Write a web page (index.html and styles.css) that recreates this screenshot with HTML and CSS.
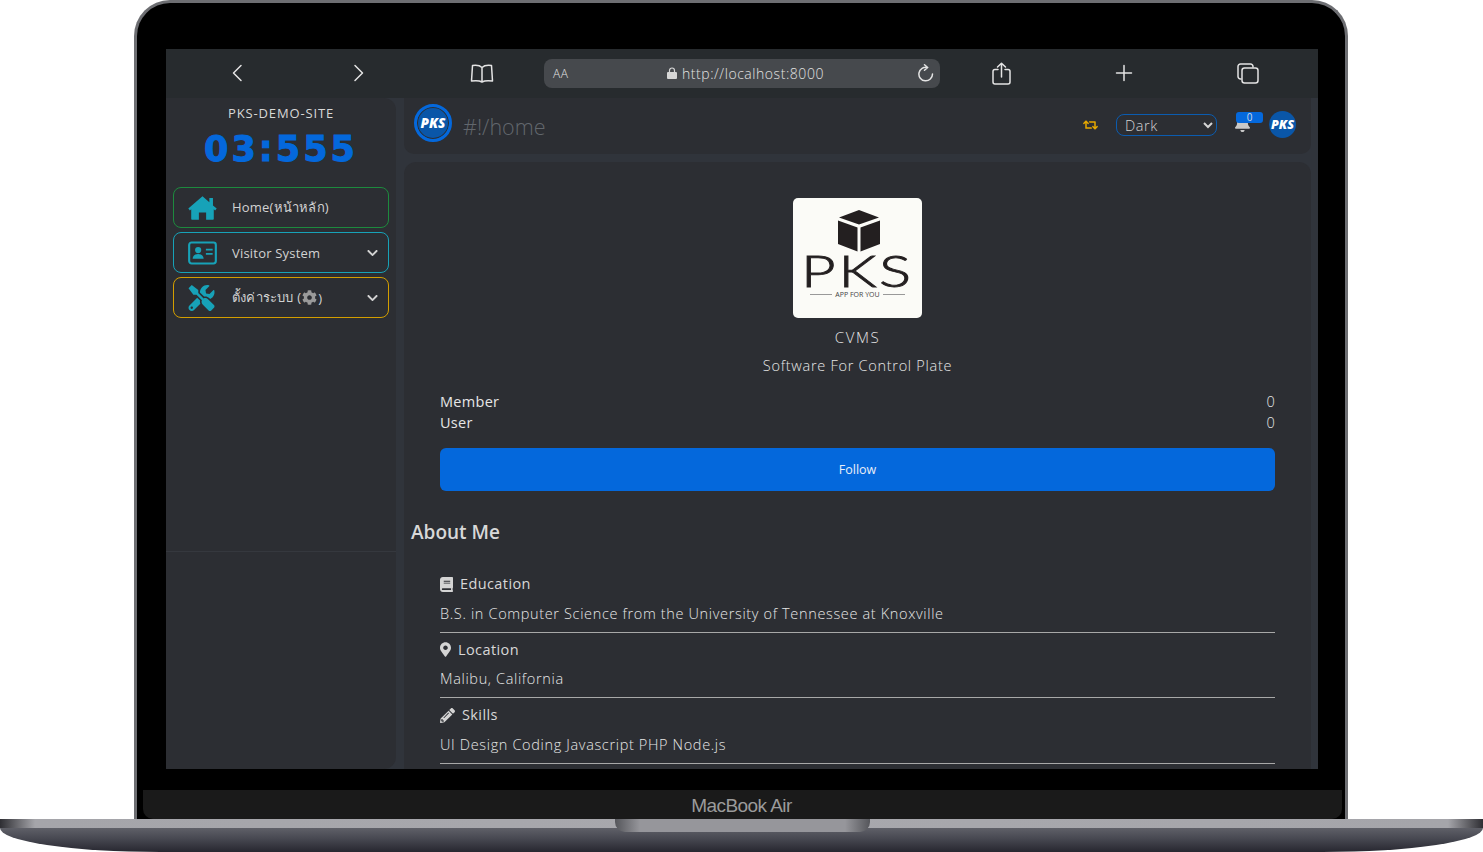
FILE: index.html
```html
<!DOCTYPE html>
<html lang="en">
<head>
    <meta charset="UTF-8">
    <title>PKS-DEMO-SITE</title>
    <link rel="stylesheet" href="styles.css">
</head>
<body>
    <div class="laptop">
        <div class="lid">
            <div class="screen">
                <div class="browser-bar">
                    <svg class="bar-icon" width="12" height="18" viewBox="0 0 12 18"><path d="M10 1.500 2.500 9l7.500 7.500"/></svg>
                    <svg class="bar-icon" width="12" height="18" viewBox="0 0 12 18"><path d="M2 1.500 9.500 9 2 16.500"/></svg>
                    <svg class="bar-icon" width="24" height="19" viewBox="0 0 24 19"><path d="M12 3.500C10 1.500 6 1 2.500 1.500L1.500 17c3.500-.5 8-.5 10.500 1 2.500-1.500 7-1.500 10.500-1L21.500 1.500C18 1 14 1.500 12 3.500zM12 3.500V18"/></svg>
                    <div class="url-bar">
                        <span class="aa">AA</span>
                        <span class="url">
                            <svg width="10" height="12" viewBox="0 0 10 12"><path class="lock" d="M1 5h8a1 1 0 0 1 1 1v5a1 1 0 0 1-1 1H1a1 1 0 0 1-1-1V6a1 1 0 0 1 1-1z"/><path d="M2.500 5V3.500a2.500 2.500 0 0 1 5 0V5" fill="none" stroke="#d6d6d6" stroke-width="1.200"/></svg>
                            http://localhost:8000
                        </span>
                        <svg class="bar-icon reload" width="17" height="19" viewBox="0 0 17 19"><path d="M10.500 3.500A6.800 6.800 0 1 0 15.500 10M7.500.8l3.200 2.700-3.200 2.700"/></svg>
                    </div>
                    <svg class="bar-icon" width="19" height="23" viewBox="0 0 19 23"><path d="M6 7.500H3a2 2 0 0 0-2 2V20a2 2 0 0 0 2 2h13a2 2 0 0 0 2-2V9.500a2 2 0 0 0-2-2h-3M9.500 15V1.500M5.500 5l4-3.800 4 3.800"/></svg>
                    <svg class="bar-icon" width="18" height="18" viewBox="0 0 18 18"><path d="M9 1.500v15M1.500 9h15"/></svg>
                    <svg class="bar-icon" width="22" height="21" viewBox="0 0 22 21"><path d="M4 16H3.500A2.500 2.500 0 0 1 1 13.500v-10A2.500 2.500 0 0 1 3.500 1h10A2.500 2.500 0 0 1 16 3.500V4"/><rect x="5" y="5" width="16" height="15" rx="2.500"/></svg>
                </div>

                <div class="app">
                    <aside class="sidebar">
                        <div class="side-top">
                            <div class="site-name">PKS-DEMO-SITE</div>
                            <div class="clock">03:555</div>
                            <a class="nav-item nav-green">
                                <svg class="nav-icon" viewBox="0 0 576 512"><path d="M288 24 6 268l32 36 26-22v190a16 16 0 0 0 16 16h136V344h144v144h136a16 16 0 0 0 16-16V282l26 22 32-36-74-64V56h-72v84z"/></svg>
                                <span class="nav-text">Home(หน้าหลัก)</span>
                            </a>
                            <a class="nav-item nav-teal">
                                <svg class="nav-icon" viewBox="0 0 30 24"><rect x="1.200" y="1.200" width="27.600" height="21.600" rx="2.500" fill="none" stroke="currentColor" stroke-width="2.200"/><circle cx="10.500" cy="9" r="3.200"/><path d="M4.800 18c0-3.200 2.300-5 5.700-5s5.700 1.800 5.700 5zM18.500 7.500h7v1.800h-7zM18.500 12h7v1.800h-7z"/></svg>
                                <span class="nav-text">Visitor System</span>
                                <svg class="chevron" viewBox="0 0 448 512"><path d="M207.029 381.476L12.686 187.132c-9.373-9.373-9.373-24.569 0-33.941l22.667-22.667c9.357-9.357 24.522-9.375 33.901-.04L224 284.505l154.745-154.021c9.379-9.335 24.544-9.317 33.901.04l22.667 22.667c9.373 9.373 9.373 24.569 0 33.941L240.971 381.476c-9.373 9.372-24.569 9.372-33.942 0z"/></svg>
                            </a>
                            <a class="nav-item nav-gold">
                                <svg class="nav-icon nav-tools" viewBox="0 0 512 512"><path d="M501.100 395.700L384 278.600c-23.100-23.100-57.600-27.600-85.400-13.900L192 158.100V96L64 0 0 64l96 128h62.100l106.600 106.600c-13.600 27.800-9.200 62.300 13.900 85.400l117.100 117.100c14.600 14.600 38.200 14.600 52.700 0l52.700-52.700c14.500-14.600 14.500-38.200 0-52.700zM331.700 225c28.300 0 54.900 11 74.900 31l19.400 19.400c15.800-6.900 30.800-16.500 43.800-29.500 37.100-37.100 49.700-89.300 37.900-136.700-2.200-9-13.500-12.100-20.100-5.500l-74.400 74.400-67.900-11.300L334 98.900l74.400-74.400c6.600-6.600 3.400-17.900-5.700-20.200-47.400-11.700-99.600.9-136.600 37.900-28.500 28.500-41.900 66.100-41.200 103.600l82.100 82.100c8.100-1.900 16.500-2.900 24.700-2.900zm-103.900 82l-56.700-56.700L18.700 402.800c-25 25-25 65.500 0 90.500s65.500 25 90.500 0l123.600-123.600c-7.600-19.900-9.900-41.600-5-62.700zM64 472c-13.200 0-24-10.800-24-24 0-13.300 10.700-24 24-24s24 10.700 24 24c0 13.200-10.700 24-24 24z"/></svg>
                                <span class="nav-text">ตั้งค่าระบบ (<svg class="cog" viewBox="0 0 512 512"><path d="M487.400 315.700l-42.600-24.600c4.300-23.200 4.300-47 0-70.200l42.600-24.600c4.900-2.800 7.100-8.600 5.500-14-11.100-35.600-30-67.800-54.700-94.600-3.800-4.100-10-5.100-14.800-2.300L380.800 110c-17.900-15.400-38.500-27.300-60.800-35.100V25.800c0-5.600-3.900-10.500-9.400-11.700-36.700-8.200-74.300-7.800-109.200 0-5.500 1.200-9.400 6.100-9.400 11.700V75c-22.200 7.900-42.800 19.800-60.800 35.100L88.700 85.500c-4.900-2.800-11-1.900-14.800 2.300-24.700 26.700-43.600 58.900-54.700 94.600-1.700 5.400.6 11.200 5.500 14L67.300 221c-4.300 23.200-4.300 47 0 70.200l-42.600 24.600c-4.900 2.800-7.100 8.600-5.500 14 11.100 35.600 30 67.800 54.700 94.600 3.800 4.100 10 5.100 14.800 2.300l42.600-24.600c17.900 15.400 38.500 27.300 60.800 35.100v49.200c0 5.600 3.900 10.500 9.400 11.700 36.700 8.200 74.300 7.800 109.200 0 5.500-1.200 9.400-6.100 9.400-11.700v-49.200c22.200-7.900 42.800-19.800 60.800-35.100l42.600 24.600c4.900 2.800 11 1.900 14.800-2.300 24.700-26.700 43.600-58.900 54.700-94.600 1.500-5.500-.7-11.300-5.600-14.100zM256 336c-44.100 0-80-35.900-80-80s35.900-80 80-80 80 35.900 80 80-35.900 80-80 80z"/></svg>)</span>
                                <svg class="chevron" viewBox="0 0 448 512"><path d="M207.029 381.476L12.686 187.132c-9.373-9.373-9.373-24.569 0-33.941l22.667-22.667c9.357-9.357 24.522-9.375 33.901-.04L224 284.505l154.745-154.021c9.379-9.335 24.544-9.317 33.901.04l22.667 22.667c9.373 9.373 9.373 24.569 0 33.941L240.971 381.476c-9.373 9.372-24.569 9.372-33.942 0z"/></svg>
                            </a>
                        </div>
                    </aside>

                    <main class="main">
                        <header class="topbar">
                            <div class="avatar avatar-big">PKS</div>
                            <div class="route">#!/home</div>
                            <svg class="swap" viewBox="0 0 640 512"><path d="M629.657 343.598L528.971 444.284c-9.373 9.372-24.568 9.372-33.941 0L394.343 343.598c-9.373-9.373-9.373-24.569 0-33.941l10.823-10.823c9.562-9.562 25.133-9.340 34.419.492L480 342.118V160H292.451a24.005 24.005 0 0 1-16.971-7.029l-16-16C244.361 121.851 255.069 96 276.451 96H520c13.255 0 24 10.745 24 24v222.118l40.416-43.792c9.285-9.831 24.856-10.054 34.419-.492l10.823 10.823c9.372 9.372 9.372 24.569-.001 33.941zm-265.138 15.431A23.999 23.999 0 0 0 347.548 352H160V169.881l40.416 43.792c9.286 9.831 24.856 10.054 34.419.491l10.822-10.822c9.373-9.373 9.373-24.569 0-33.941L144.971 67.716c-9.373-9.373-24.569-9.373-33.941 0L10.343 168.402c-9.373 9.373-9.373 24.569 0 33.941l10.822 10.822c9.562 9.562 25.133 9.340 34.419-.491L96 169.881V392c0 13.255 10.745 24 24 24h243.549c21.382 0 32.090-25.851 16.971-40.971l-16.001-16z"/></svg>
                            <select class="theme-select">
                                <option>Dark</option>
                                <option>Light</option>
                            </select>
                            <div class="bell-wrap">
                                <svg class="bell" viewBox="0 0 448 512"><path d="M224 512c35.320 0 63.970-28.650 63.970-64H160.030c0 35.350 28.650 64 63.970 64zm215.390-149.710c-19.320-20.760-55.470-51.990-55.470-154.290 0-77.700-54.480-139.900-127.940-155.160V32c0-17.670-14.320-32-31.980-32s-31.980 14.330-31.980 32v20.840C118.560 68.100 64.080 130.300 64.080 208c0 102.300-36.150 133.530-55.470 154.290-6 6.450-8.660 14.160-8.610 21.710.11 16.400 12.980 32 32.100 32h383.800c19.120 0 32-15.600 32.100-32 .05-7.550-2.610-15.270-8.610-21.710z"/></svg>
                                <span class="badge">0</span>
                            </div>
                            <div class="avatar avatar-small">PKS</div>
                        </header>

                        <section class="card">
                            <div class="profile">
                                <div class="logo">
                                    <svg class="cube" width="42" height="42" viewBox="0 0 42 42"><path d="M21 0 41 7.500 21 14.500 1 7.500zM0 10.500 19.500 17.500V41.500L0 34zM42 10.500 22.500 17.500V41.500L42 34z"/></svg>
                                    <div class="logo-name">PKS</div>
                                    <div class="logo-tag">APP FOR YOU</div>
                                </div>
                                <div class="app-name">CVMS</div>
                                <div class="app-desc">Software For Control Plate</div>
                                <div class="stat"><span>Member</span><span class="stat-num">0</span></div>
                                <div class="stat"><span>User</span><span class="stat-num">0</span></div>
                                <button class="follow" type="button">Follow</button>
                            </div>

                            <h2 class="about-title">About Me</h2>

                            <div class="about-item">
                                <div class="about-head">
                                    <svg width="13" height="15" viewBox="0 0 448 512"><path d="M448 360V24c0-13.300-10.700-24-24-24H96C43 0 0 43 0 96v320c0 53 43 96 96 96h328c13.300 0 24-10.700 24-24v-16c0-7.500-3.500-14.300-8.900-18.700-4.200-15.400-4.200-59.300 0-74.700 5.400-4.300 8.900-11.100 8.900-18.600zM128 134c0-3.300 2.700-6 6-6h212c3.300 0 6 2.700 6 6v20c0 3.300-2.700 6-6 6H134c-3.300 0-6-2.700-6-6v-20zm0 64c0-3.300 2.700-6 6-6h212c3.300 0 6 2.700 6 6v20c0 3.300-2.700 6-6 6H134c-3.300 0-6-2.700-6-6v-20zm253.400 250H96c-17.700 0-32-14.300-32-32 0-17.600 14.400-32 32-32h285.400c-1.900 17.100-1.900 46.900 0 64z"/></svg>
                                    Education
                                </div>
                                <div class="about-text">B.S. in Computer Science from the University of Tennessee at Knoxville</div>
                            </div>
                            <div class="about-item">
                                <div class="about-head">
                                    <svg width="11" height="15" viewBox="0 0 384 512"><path d="M172.268 501.670C26.970 291.031 0 268.413 0 192 0 85.961 85.961 0 192 0s192 85.961 192 192c0 76.413-26.970 99.031-172.268 309.670-9.535 13.774-29.930 13.773-39.464 0zM192 272c44.183 0 80-35.817 80-80s-35.817-80-80-80-80 35.817-80 80 35.817 80 80 80z"/></svg>
                                    Location
                                </div>
                                <div class="about-text">Malibu, California</div>
                            </div>
                            <div class="about-item">
                                <div class="about-head">
                                    <svg width="15" height="15" viewBox="0 0 512 512"><path d="M497.900 142.100l-46.100 46.100c-4.700 4.700-12.300 4.700-17 0l-111-111c-4.700-4.700-4.700-12.300 0-17l46.100-46.100c18.700-18.700 49.100-18.700 67.900 0l60.100 60.100c18.800 18.700 18.800 49.100 0 67.900zM284.200 99.800L21.600 362.400.4 483.900c-2.900 16.400 11.400 30.600 27.800 27.800l121.500-21.300 262.600-262.600c4.700-4.700 4.700-12.300 0-17l-111-111c-4.800-4.700-12.400-4.700-17.100 0zM124.100 339.900c-5.500-5.500-5.500-14.300 0-19.800l154-154c5.500-5.500 14.300-5.500 19.800 0s5.500 14.300 0 19.800l-154 154c-5.500 5.500-14.300 5.500-19.800 0zM88 424h48v36.300l-64.500 11.300-31.100-31.100L51.700 376H88v48z"/></svg>
                                    Skills
                                </div>
                                <div class="about-text">UI Design Coding Javascript PHP Node.js</div>
                            </div>
                        </section>
                    </main>
                </div>
            </div>
            <div class="chin"><span class="model">MacBook Air</span></div>
        </div>
        <div class="base">
            <div class="lip"><div class="notch"></div></div>
            <div class="shell"></div>
        </div>
    </div>
</body>
</html>
```

FILE: styles.css
```css
html, body {
    margin: 0;
    padding: 0;
    height: 852px;
    overflow: hidden;
    background-color: white;
    font-family: "Open Sans", "Noto Sans", sans-serif;
}
svg {
    display: block;
    flex: none;
}

/* laptop frame */
.laptop {
    width: 1483px;
    height: 852px;
}
.lid {
    width: 1214px;
    height: 819px;
    box-sizing: border-box;
    margin-left: 134px;
    padding-top: 46px;
    background-color: black;
    border: 3px solid #6d6e72;
    border-bottom: none;
    border-radius: 36px 36px 0 0;
}
.screen {
    width: 1152px;
    height: 720px;
    margin-left: 29px;
    overflow: hidden;
    display: flex;
    flex-direction: column;
    background-color: #30343b;
}
.chin {
    height: 29px;
    box-sizing: border-box;
    padding-top: 2px;
    margin: 21px 3px 0 6px;
    background-color: #1a1a1a;
    border-radius: 0 0 10px 10px;
    display: flex;
    justify-content: center;
    align-items: center;
}
.model {
    font-family: "Liberation Sans", sans-serif;
    font-size: 19px;
    letter-spacing: -0.55px;
    color: #9b9b9b;
    margin-left: -2px;
}
.base {
    width: 1483px;
}
.lip {
    height: 9px;
    display: flex;
    justify-content: center;
    background: linear-gradient(90deg, #2e2e33 0, #a5a5aa 35px, #a8a8ad 50%, #a5a5aa 1448px, #2e2e33 100%);
}
.notch {
    width: 255px;
    height: 13px;
    margin-left: 1px;
    flex: none;
    position: relative;
    z-index: 1;
    background: linear-gradient(90deg, #55565b 0, #96969b 25px, #96969b 230px, #55565b 100%);
    border-radius: 0 0 10px 10px;
}
.shell {
    height: 24px;
    background: linear-gradient(180deg, #5f6068 0, #44454e 50%, #272730 100%);
    border-radius: 0 0 160px 160px / 0 0 24px 24px;
}

/* mobile browser bar */
.browser-bar {
    height: 49px;
    flex: none;
    box-sizing: border-box;
    padding: 0 10px 1px;
    display: grid;
    grid-template-columns: 122px 122px 124px 396px 122px 124px 124px;
    align-items: center;
    justify-items: center;
    background-color: #272b2e;
}
.bar-icon {
    fill: none;
    stroke: #e4e4e4;
    stroke-width: 1.5;
    stroke-linecap: round;
    stroke-linejoin: round;
}
.url-bar {
    width: 396px;
    height: 29px;
    box-sizing: border-box;
    padding: 0 6px 0 9px;
    display: flex;
    align-items: center;
    background-color: #46494d;
    border-radius: 8px;
    color: #e2e2e2;
}
.aa {
    width: 114px;
    font-size: 12px;
    font-weight: 300;
    letter-spacing: 0.5px;
}
.url {
    flex: 1;
    display: flex;
    align-items: center;
    gap: 5px;
    font-size: 14px;
    font-weight: 300;
    letter-spacing: 0.55px;
}
.lock {
    fill: #d6d6d6;
}

/* app layout */
.app {
    flex: 1;
    display: flex;
    gap: 8px;
    min-height: 0;
}
.sidebar {
    width: 230px;
    flex: none;
    background-color: #2c2e33;
    border-radius: 0 12px 12px 0;
}
.side-top {
    height: 454px;
    box-sizing: border-box;
    padding: 7px 7px 0;
    border-bottom: 1px solid #35383e;
}
.site-name {
    text-align: center;
    font-size: 13px;
    line-height: 17px;
    letter-spacing: 0.85px;
    color: #d8d8d8;
}
.clock {
    text-align: center;
    font-family: "DejaVu Sans", sans-serif;
    font-weight: bold;
    font-size: 35px;
    line-height: 36px;
    letter-spacing: 3px;
    margin: 9px 0 20px;
    color: #0468dc;
    -webkit-text-stroke: 1px #0468dc;
}
.nav-item {
    height: 41px;
    box-sizing: border-box;
    margin-bottom: 4px;
    padding: 0 10px 0 14px;
    display: flex;
    align-items: center;
    border: 1px solid;
    border-radius: 8px;
    color: #17a2b8;
}
.nav-green { border-color: #1d8a3e; }
.nav-teal { border-color: #17a2b8; }
.nav-gold { border-color: #d39e00; }
.nav-icon {
    width: 29px;
    height: 26px;
    fill: currentColor;
}
.nav-tools {
    width: 27px;
    margin-right: 2px;
}
.nav-text {
    margin-left: 15px;
    flex: 1;
    display: flex;
    align-items: center;
    font-size: 13px;
    letter-spacing: 0.2px;
    color: #d2d2d2;
}
.cog {
    width: 15px;
    height: 15px;
    margin: 0 1px;
    fill: #9a9a9a;
}
.chevron {
    width: 11px;
    height: 12px;
    fill: #d2d2d2;
}

/* main column */
.main {
    flex: 1;
    margin-right: 7px;
    min-width: 0;
}
.topbar {
    height: 56px;
    box-sizing: border-box;
    padding: 0 15px 0 10px;
    display: flex;
    align-items: center;
    background-color: #2c2e33;
    border-radius: 0 0 10px 10px;
}
.avatar {
    border-radius: 50%;
    background-color: #0a56a8;
    color: white;
    font-weight: 800;
    font-style: italic;
    display: flex;
    align-items: center;
    justify-content: center;
    flex: none;
}
.avatar-big {
    width: 38px;
    height: 38px;
    box-sizing: border-box;
    margin-top: -6px;
    font-size: 13.5px;
    border: 3px solid #0468dc;
    box-shadow: inset 0 0 0 1px #2c2e33;
}
.avatar-small {
    width: 27px;
    height: 27px;
    margin: -4px 0 0 6px;
    font-size: 12.5px;
}
.route {
    flex: 1;
    margin-left: 11px;
    font-size: 21.5px;
    font-weight: 300;
    color: #62676d;
}
.swap {
    width: 15px;
    height: 12px;
    fill: #e6a800;
    margin: -2px 18px 0 0;
}
.theme-select {
    width: 101px;
    height: 22px;
    margin-top: -2px;
    padding: 0 2px 0 4px;
    font-family: inherit;
    font-size: 14.5px;
    font-weight: 300;
    letter-spacing: 0.6px;
    color: #d4d4d4;
    background-color: transparent;
    border: 1px solid #0b5cb0;
    border-radius: 8px;
}
.theme-select option {
    color: #222;
}
.bell-wrap {
    width: 28px;
    height: 28px;
    margin: 0 0 0 18px;
    position: relative;
}
.bell {
    width: 15px;
    height: 17px;
    fill: #c8c8c8;
    margin-top: 3px;
}
.badge {
    position: absolute;
    top: 0;
    left: 1px;
    width: 27px;
    height: 11px;
    border-radius: 3px;
    background-color: #0468dc;
    color: #cfd8e6;
    font-size: 10px;
    line-height: 11px;
    text-align: center;
}

/* profile card */
.card {
    height: 620px;
    margin-top: 8px;
    padding: 36px 36px 0;
    box-sizing: border-box;
    background-color: #2c2e33;
    border-radius: 12px 12px 0 0;
    color: #e6e6e6;
}
.profile {
    display: flex;
    flex-direction: column;
}
.logo {
    width: 129px;
    height: 120px;
    box-sizing: border-box;
    align-self: center;
    padding-top: 12px;
    display: flex;
    flex-direction: column;
    align-items: center;
    background-color: #fbfbf7;
    border-radius: 5px;
    color: #231f20;
}
.cube {
    fill: #231f20;
    margin-left: 2px;
}
.logo-name {
    font-family: Lato, sans-serif;
    font-weight: 300;
    font-size: 44px;
    line-height: 36px;
    letter-spacing: 2px;
    margin-top: 0;
    transform: scaleX(1.36);
    -webkit-text-stroke: 0.9px #231f20;
}
.logo-tag {
    display: flex;
    align-items: center;
    gap: 3px;
    font-family: "Open Sans", sans-serif;
    font-size: 7px;
    line-height: 9px;
    margin-top: 2px;
    color: #444;
}
.logo-tag::before, .logo-tag::after {
    content: "";
    width: 22px;
    height: 1px;
    background-color: #999;
}
.app-name {
    text-align: center;
    font-size: 15px;
    font-weight: 300;
    line-height: 20px;
    letter-spacing: 1.6px;
    margin-top: 9px;
}
.app-desc {
    text-align: center;
    font-size: 14.5px;
    font-weight: 300;
    line-height: 20px;
    letter-spacing: 0.72px;
    margin-top: 9px;
}
.stat {
    display: flex;
    justify-content: space-between;
    font-size: 14.5px;
    line-height: 21px;
    letter-spacing: 0.3px;
}
.app-desc + .stat {
    margin-top: 15px;
}
.stat-num {
    font-weight: 300;
}
.follow {
    height: 43px;
    margin-top: 15px;
    padding: 0;
    font-family: inherit;
    font-size: 12.5px;
    color: #e8eef8;
    background-color: #0468dc;
    border: none;
    border-radius: 6px;
}
.about-title {
    margin: 28px 0 22px -29px;
    font-size: 19px;
    font-weight: 600;
    line-height: 26px;
    color: #d8d8d8;
}
.about-item {
    padding: 7px 0 8px;
    border-bottom: 1px solid #a8a8a8;
}
.about-head {
    display: flex;
    align-items: center;
    gap: 7px;
    font-size: 14.5px;
    line-height: 20px;
    letter-spacing: 0.4px;
    margin-bottom: 9.500px;
    color: #d8d8d8;
}
.about-head svg {
    fill: #d4d4d4;
}
.about-text {
    font-size: 14.5px;
    font-weight: 300;
    line-height: 20px;
    letter-spacing: 0.65px;
}
```
